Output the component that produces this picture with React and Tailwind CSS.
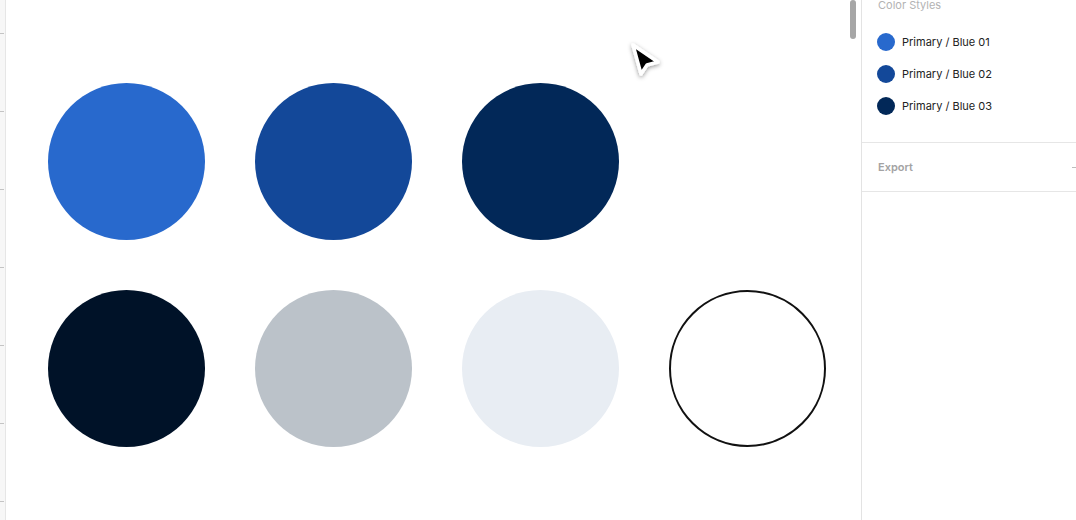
import React from "react";

const swatches = [
  { name: "blue01", cls: "bg-[#2869cd]" },
  { name: "blue02", cls: "bg-[#134899]" },
  { name: "blue03", cls: "bg-[#022858]" },
  { name: "spacer", cls: "" },
  { name: "navy", cls: "bg-[#001228]" },
  { name: "gray", cls: "bg-[#bbc2c9]" },
  { name: "light", cls: "bg-[#e8edf3]" },
  { name: "white", cls: "bg-white border-2 border-[#111]" },
];

const styles = [
  { label: "Primary / Blue 01", cls: "bg-[#2869cd]" },
  { label: "Primary / Blue 02", cls: "bg-[#134899]" },
  { label: "Primary / Blue 03", cls: "bg-[#022858]" },
];

function Ruler() {
  return (
    <div className="w-[6px] shrink-0 bg-[#f7f7f7] border-r border-[#e6e6e6] flex flex-col pt-[33px] gap-[77px]">
      {[0, 1, 2, 3, 4, 5, 6].map((i) => (
        <div key={i} className="h-px w-[4px] bg-[#c4c4c4]" />
      ))}
    </div>
  );
}

function Cursor() {
  return (
    <svg
      className="absolute left-[614px] top-[38px]"
      width="48"
      height="46"
      viewBox="0 0 48 46"
    >
      <defs>
        <filter id="sh" x="-40%" y="-40%" width="180%" height="180%">
          <feDropShadow dx="0" dy="1.5" stdDeviation="2" floodColor="#000" floodOpacity="0.4" />
        </filter>
      </defs>
      <path
        d="M13 7 L38 24 L27 27 L21 36 Z"
        fill="#000"
        stroke="#fff"
        strokeWidth="3.5"
        strokeLinejoin="round"
        filter="url(#sh)"
      />
    </svg>
  );
}

export default function App() {
  return (
    <div className="w-[1076px] h-[520px] overflow-hidden flex bg-white font-['Inter','Liberation_Sans',sans-serif]">
      <Ruler />

      {/* canvas */}
      <div className="relative flex-1 pl-[42px] pt-[83px]">
        <div className="grid grid-cols-[repeat(4,157px)] gap-[50px]">
          {swatches.map((s) => (
            <div key={s.name} className={`w-[157px] h-[157px] rounded-full ${s.cls}`} />
          ))}
        </div>
        <div className="absolute right-[5px] top-0 w-[6px] h-[39px] rounded-full bg-[#a6a6a6]" />
        <Cursor />
      </div>

      {/* right panel */}
      <div className="w-[215px] shrink-0 border-l border-[#e3e3e3] flex flex-col">
        <div className="pl-[16px] -mt-[3px] h-[16px] text-[11px] leading-[16px] text-[#b3b3b3]">
          Color Styles
        </div>
        <div className="flex flex-col gap-[14px] pl-[15px] pt-[20px] pb-[27px]">
          {styles.map((s) => (
            <div key={s.label} className="flex items-center gap-[7px] h-[18px]">
              <div className={`w-[18px] h-[18px] rounded-full ${s.cls}`} />
              <span className="text-[11px] text-[#222]">{s.label}</span>
            </div>
          ))}
        </div>
        <div className="h-[50px] border-y border-[#e6e6e6] flex items-center justify-between pl-[16px]">
          <span className="text-[11px] font-semibold text-[#a3a3a3]">Export</span>
          <span className="w-[6px] h-px bg-[#bdbdbd] mr-[-2px]" />
        </div>
      </div>
    </div>
  );
}
